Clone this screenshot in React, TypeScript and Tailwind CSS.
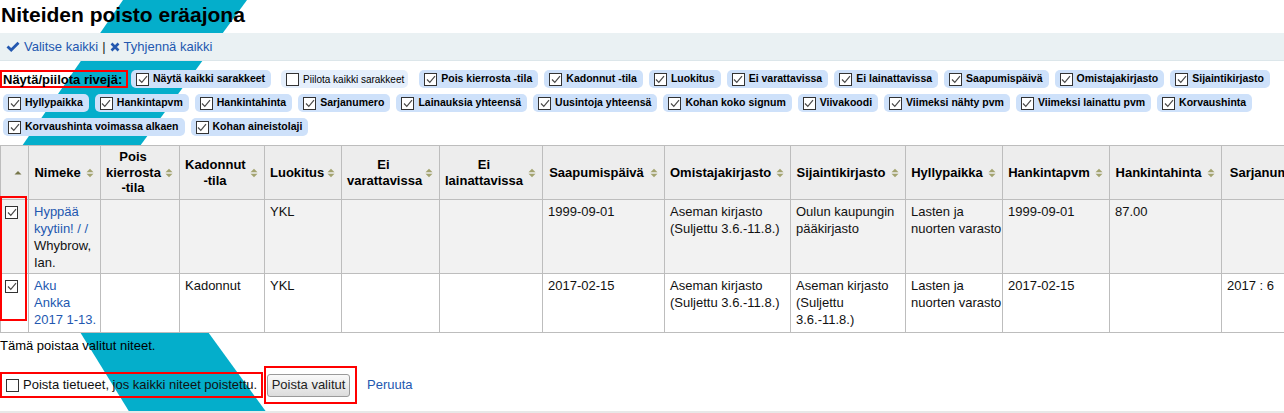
import React from 'react'

const Box = ({ checked = true }: { checked?: boolean }) => (
  <span className="flex h-[13px] w-[13px] shrink-0 items-center justify-center border border-[#333] bg-white">
    {checked && (
      <svg width="10" height="9" viewBox="0 0 10 9">
        <path d="M1 4.5 L3.8 7.3 L9 1.2" fill="none" stroke="#4a4a4a" strokeWidth="1.2" />
      </svg>
    )}
  </span>
)

const Chip = ({ label, light, extra = '' }: { label: string; light?: boolean; extra?: string }) => (
  <span
    className={
      (light
        ? 'flex h-[18px] shrink-0 items-center gap-[4px] whitespace-nowrap rounded-[5px] bg-[#e5effc] pl-[5px] pr-[4px] text-[10px] font-normal text-black '
        : 'flex h-[18px] shrink-0 items-center gap-[4px] whitespace-nowrap rounded-[5px] bg-[#cee1fa] pl-[5px] pr-[6px] text-[10.5px] font-bold text-black ') + extra
    }
  >
    <Box checked={!light} />
    {label}
  </span>
)

const SortIcon = ({ asc }: { asc?: boolean }) => (
  <svg className="absolute right-[6px] top-1/2 -translate-y-1/2" width="8" height="10" viewBox="0 0 8 10">
    {asc ? (
      <path d="M0.5 6.5 L4 3 L7.5 6.5 Z" fill="#77774a" />
    ) : (
      <>
        <path d="M0.5 4.2 L4 0.8 L7.5 4.2 Z" fill="#a3a370" />
        <path d="M0.5 5.8 L4 9.2 L7.5 5.8 Z" fill="#a3a370" />
      </>
    )}
  </svg>
)

const Th = ({ lines, asc }: { lines: string[]; asc?: boolean }) => (
  <th className="relative whitespace-nowrap border border-[#bdbdbd] bg-[#ededed] pl-[5px] pr-[19px] text-center align-middle text-[13px] font-bold leading-[15.5px] text-black">
    {lines.map((l, i) => (
      <React.Fragment key={i}>
        {i > 0 && <br />}
        {l}
      </React.Fragment>
    ))}
    <SortIcon asc={asc} />
  </th>
)

const Td = ({ lines = [], link }: { lines?: string[]; link?: number }) => (
  <td className="whitespace-nowrap border border-[#bdbdbd] px-[5px] pt-[3px] align-top text-[13px] leading-[17px] text-[#111]">
    {lines.map((l, i) => (
      <React.Fragment key={i}>
        {i > 0 && <br />}
        {link !== undefined && i < link ? <a className="text-[#2358b0]">{l}</a> : l}
      </React.Fragment>
    ))}
  </td>
)

const widths = [28, 72, 79, 85, 77, 98, 103, 122, 126, 115, 97, 107, 112, 110, 140]

const headers: string[][] = [
  ['Nimeke'],
  ['Pois', 'kierrosta', '-tila'],
  ['Kadonnut', '-tila'],
  ['Luokitus'],
  ['Ei', 'varattavissa'],
  ['Ei', 'lainattavissa'],
  ['Saapumispäivä'],
  ['Omistajakirjasto'],
  ['Sijaintikirjasto'],
  ['Hyllypaikka'],
  ['Hankintapvm'],
  ['Hankintahinta'],
  ['Sarjanumero'],
  ['Lainauksia', 'yhteensä'],
]

const rows = [
  {
    bg: 'h-[74px] bg-[#f2f2f2]',
    cells: [
      { lines: ['Hyppää', 'kyytiin! / /', 'Whybrow,', 'Ian.'], link: 2 },
      {},
      {},
      { lines: ['YKL'] },
      {},
      {},
      { lines: ['1999-09-01'] },
      { lines: ['Aseman kirjasto', '(Suljettu 3.6.-11.8.)'] },
      { lines: ['Oulun kaupungin', 'pääkirjasto'] },
      { lines: ['Lasten ja', 'nuorten varasto'] },
      { lines: ['1999-09-01'] },
      { lines: ['87.00'] },
      {},
      {},
    ],
  },
  {
    bg: 'h-[59px] bg-white',
    cells: [
      { lines: ['Aku', 'Ankka', '2017 1-13.'], link: 3 },
      {},
      { lines: ['Kadonnut'] },
      { lines: ['YKL'] },
      {},
      {},
      { lines: ['2017-02-15'] },
      { lines: ['Aseman kirjasto', '(Suljettu 3.6.-11.8.)'] },
      { lines: ['Aseman kirjasto', '(Suljettu', '3.6.-11.8.)'] },
      { lines: ['Lasten ja', 'nuorten varasto'] },
      { lines: ['2017-02-15'] },
      {},
      { lines: ['2017 : 6'] },
      {},
    ],
  },
]

const row1 = ['Kadonnut -tila', 'Luokitus', 'Ei varattavissa', 'Ei lainattavissa', 'Saapumispäivä', 'Omistajakirjasto', 'Sijaintikirjasto']
const row2 = ['Hyllypaikka', 'Hankintapvm', 'Hankintahinta', 'Sarjanumero', 'Lainauksia yhteensä', 'Uusintoja yhteensä', 'Kohan koko signum', 'Viivakoodi', 'Viimeksi nähty pvm', 'Viimeksi lainattu pvm', 'Korvaushinta']
const row3 = ['Korvaushinta voimassa alkaen', 'Kohan aineistolaji']

export default function App() {
  return (
    <div className="relative h-[413px] w-[1284px] overflow-hidden bg-white font-['Liberation_Sans',Arial,sans-serif] text-black">
      {/* diagonal decoration behind the page */}
      <svg className="absolute left-0 top-0" width="1284" height="413">
        <polygon points="123,0 247,0 140,146 22,146" fill="#04aecb" />
        <polygon points="80,332 208,332 267,413 130,413" fill="#04aecb" />
      </svg>

      <div className="relative">
        <h1 className="h-[33px] pl-[1px] pt-[3px] text-[21px] font-bold leading-[24px]">Niteiden poisto eräajona</h1>

        <div className="flex h-[28px] items-center border-b border-[#dce6ea] bg-[#eaf1f3] pl-[6px] text-[13px] text-[#2358b0]">
          <svg width="14" height="11" viewBox="0 0 14 11" className="mr-[4px]">
            <path d="M1.5 5.5 L5.2 9 L12.5 1.8" fill="none" stroke="#2358b0" strokeWidth="2.8" />
          </svg>
          <span>Valitse kaikki</span>
          <span className="mx-[4px] text-[#222]">|</span>
          <svg width="10" height="10" viewBox="0 0 10 10" className="mr-[4px]">
            <path d="M1.5 1.5 L8.5 8.5 M8.5 1.5 L1.5 8.5" stroke="#2358b0" strokeWidth="2.6" />
          </svg>
          <span>Tyhjennä kaikki</span>
        </div>

        <div className="mt-[9px] flex flex-col gap-[6px]">
          <div className="flex items-center gap-[6px]">
            <span className="mr-[-3px] flex h-[18px] w-[128px] shrink-0 items-center whitespace-nowrap border-2 border-[#f00] pl-[1px] text-[13px] font-bold leading-none">
              Näytä/piilota rivejä:
            </span>
            <Chip label="Näytä kaikki sarakkeet" />
            <Chip label="Piilota kaikki sarakkeet" light extra="ml-[4px]" />
            <Chip label="Pois kierrosta -tila" extra="ml-[5px]" />
            {row1.map((c) => (
              <Chip key={c} label={c} />
            ))}
          </div>
          <div className="flex gap-[6px] pl-[3px]">
            {row2.map((c) => (
              <Chip key={c} label={c} />
            ))}
          </div>
          <div className="flex gap-[6px] pl-[3px]">
            {row3.map((c) => (
              <Chip key={c} label={c} />
            ))}
          </div>
        </div>

        <div className="relative mt-[9px] w-[1284px] overflow-hidden">
          <table className="table-fixed border-collapse" style={{ width: widths.reduce((a, b) => a + b, 0) }}>
            <colgroup>
              {widths.map((w, i) => (
                <col key={i} style={{ width: w }} />
              ))}
            </colgroup>
            <thead>
              <tr className="h-[54px]">
                <Th lines={[]} asc />
                {headers.map((h, i) => (
                  <Th key={i} lines={h} />
                ))}
              </tr>
            </thead>
            <tbody>
              {rows.map((r, ri) => (
                <tr key={ri} className={r.bg}>
                  <td className="border border-[#bdbdbd] pl-[4px] pt-[6px] align-top">
                    <Box />
                  </td>
                  {r.cells.map((c, ci) => (
                    <Td key={ci} lines={c.lines} link={c.link} />
                  ))}
                </tr>
              ))}
            </tbody>
          </table>
          <div className="absolute left-0 top-[51px] h-[125px] w-[27px] border-2 border-[#f00]" />
        </div>

        <p className="mt-[4px] text-[13px] leading-[17px]">Tämä poistaa valitut niteet.</p>

        <div className="mt-[12px] flex items-center">
          <label className="flex h-[26px] w-[263px] items-center gap-[4px] border-2 border-[#f00] pl-[4px] text-[13px] text-[#111]">
            <Box checked={false} />
            <span className="whitespace-nowrap">Poista tietueet, jos kaikki niteet poistettu.</span>
          </label>
          <div className="ml-[1px] flex h-[38px] w-[93px] items-center border-2 border-[#f00] pl-[1px]">
            <button className="h-[23px] w-[83px] rounded-[3px] border border-[#9a9a9a] bg-gradient-to-b from-[#fafafa] to-[#dcdcdc] text-[13px] text-[#222]">
              Poista valitut
            </button>
          </div>
          <a className="ml-[10px] text-[13px] text-[#2358b0]">Peruuta</a>
        </div>

        <div className="mt-[7px] h-[2px] bg-[#e8e8e8]" />
      </div>
    </div>
  )
}
